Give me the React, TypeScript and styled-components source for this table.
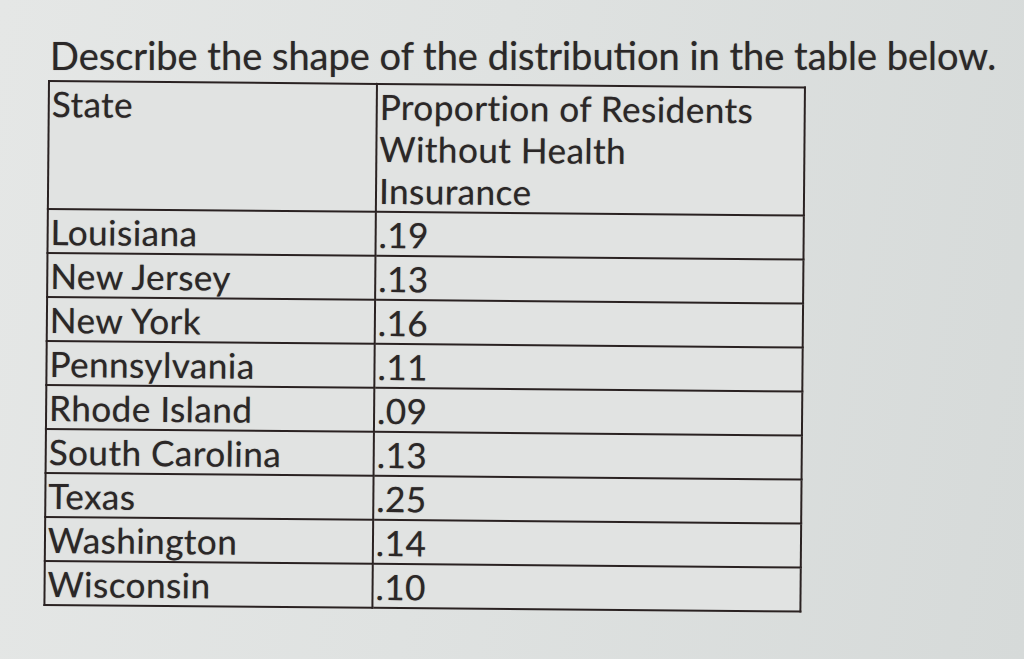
import { createGlobalStyle, styled } from 'styled-components';

const GlobalStyle = createGlobalStyle`
  html, body {
    margin: 0;
    padding: 0;
  }
  body {
    width: 1024px;
    height: 659px;
    overflow: hidden;
    font-family: Lato, 'Open Sans', sans-serif;
    color: #2b2727;
  }
`;

const Page = styled.div`
  width: 1024px;
  height: 659px;
  box-sizing: border-box;
  padding: 32px 0 0 48px;
  background: linear-gradient(100deg, #e5e7e6 0%, #dfe2e1 45%, #d6dad9 100%);
`;

const Question = styled.h1`
  margin: 0 0 2px 2px;
  font-size: 38px;
  font-weight: 400;
  line-height: 46px;
  color: #2b2828;
  white-space: nowrap;
  text-shadow: 0 0 1px rgba(40, 36, 36, 0.5);
`;

const Table = styled.table`
  border-collapse: collapse;
  table-layout: fixed;
  background: #e1e3e2;
  transform: rotate(0.5deg);
  transform-origin: 0 0;
`;

const Cell = styled.td<{ $width?: number; $head?: boolean }>`
  width: ${(p) => (p.$width ? `${p.$width}px` : 'auto')};
  height: ${(p) => (p.$head ? '126px' : '42px')};
  padding: 0 4px 0 2px;
  border: 2px solid #2a2222;
  vertical-align: top;
  font-size: 35px;
  line-height: 42px;
  letter-spacing: 0.5px;
  white-space: nowrap;
  text-shadow: 0 0 1px rgba(40, 36, 36, 0.5);
`;

const rows: [string, string][] = [
  ['Louisiana', '.19'],
  ['New Jersey', '.13'],
  ['New York', '.16'],
  ['Pennsylvania', '.11'],
  ['Rhode Island', '.09'],
  ['South Carolina', '.13'],
  ['Texas', '.25'],
  ['Washington', '.14'],
  ['Wisconsin', '.10'],
];

export default function App() {
  return (
    <>
      <GlobalStyle />
      <Page>
        <Question>Describe the shape of the distribution in the table below.</Question>
        <Table>
          <tbody>
            <tr>
              <Cell $width={320} $head>
                State
              </Cell>
              <Cell $width={420} $head>
                Proportion of Residents
                <br />
                Without Health
                <br />
                Insurance
              </Cell>
            </tr>
            {rows.map(([state, value]) => (
              <tr key={state}>
                <Cell>{state}</Cell>
                <Cell>{value}</Cell>
              </tr>
            ))}
          </tbody>
        </Table>
      </Page>
    </>
  );
}
